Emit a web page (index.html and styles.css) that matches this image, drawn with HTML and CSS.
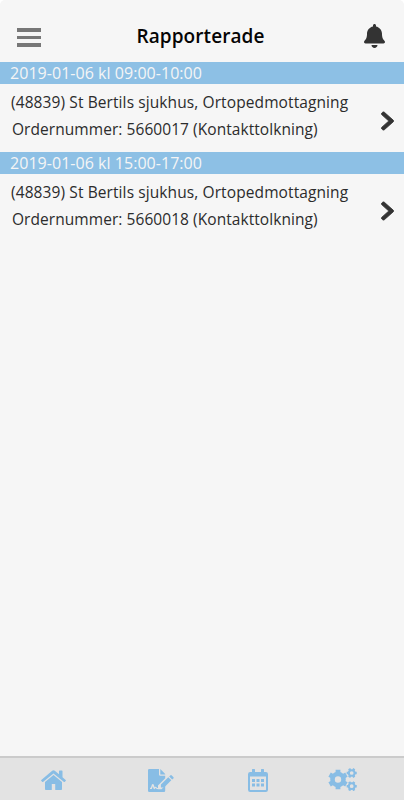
FILE: index.html
```html
<!DOCTYPE html>
<html lang="sv">
<head>
<meta charset="utf-8">
<title>Rapporterade</title>
<link rel="stylesheet" href="styles.css">
</head>
<body>
<div class="app">
  <header class="header">
    <div class="menu"><span></span><span></span><span></span></div>
    <h1>Rapporterade</h1>
    <svg class="bell" viewBox="0 0 448 512" preserveAspectRatio="none"><path d="M224 512c35.32 0 63.97-28.65 63.97-64H160.03c0 35.35 28.65 64 63.97 64zm215.39-149.71c-19.32-20.76-55.47-51.99-55.47-154.29 0-77.7-54.48-139.9-127.94-155.16V32c0-17.67-14.32-32-31.98-32s-31.98 14.33-31.98 32v20.84C118.56 68.1 64.08 130.3 64.08 208c0 102.3-36.15 133.53-55.47 154.29-6 6.45-8.66 14.16-8.61 21.71.11 16.4 12.98 32 32.1 32h383.8c19.12 0 32-15.6 32.1-32 .05-7.55-2.61-15.27-8.61-21.71z"/></svg>
  </header>
  <main class="list">
    <section class="group">
      <h2>2019-01-06 kl 09:00-10:00</h2>
      <div class="item">
        <div class="text"><p class="place">(48839) St Bertils sjukhus, Ortopedmottagning</p><p class="order">Ordernummer: 5660017 (Kontakttolkning)</p></div>
        <svg class="chevron" viewBox="20 15 280 482" preserveAspectRatio="none"><path d="M285.476 272.971L91.132 467.314c-9.373 9.373-24.569 9.373-33.941 0l-22.667-22.667c-9.357-9.357-9.375-24.522-.04-33.901L188.505 256 34.484 101.255c-9.335-9.379-9.317-24.544.04-33.901l22.667-22.667c9.373-9.373 24.569-9.373 33.941 0L285.475 239.03c9.373 9.372 9.373 24.568.001 33.941z"/></svg>
      </div>
    </section>
    <section class="group">
      <h2>2019-01-06 kl 15:00-17:00</h2>
      <div class="item">
        <div class="text"><p class="place">(48839) St Bertils sjukhus, Ortopedmottagning</p><p class="order">Ordernummer: 5660018 (Kontakttolkning)</p></div>
        <svg class="chevron" viewBox="20 15 280 482" preserveAspectRatio="none"><path d="M285.476 272.971L91.132 467.314c-9.373 9.373-24.569 9.373-33.941 0l-22.667-22.667c-9.357-9.357-9.375-24.522-.04-33.901L188.505 256 34.484 101.255c-9.335-9.379-9.317-24.544.04-33.901l22.667-22.667c9.373-9.373 24.569-9.373 33.941 0L285.475 239.03c9.373 9.372 9.373 24.568.001 33.941z"/></svg>
      </div>
    </section>
  </main>
  <nav class="tabs">
    <svg class="home" viewBox="0 0 25 20"><path d="M12.5 4.9L21 12v7.2q0 .8-.8.8h-5.400q-.6 0-.6-.6V14H10.800v5.400q0 .6-.6.6H4.800Q4 20 4 19.200V12z"/><path d="M11.200.7q1.300-1 2.600 0L18 4.200V1.200q0-.6.6-.6h2.300q.6 0 .6.600v6l3.200 2.700q.4.400.1.800l-.9 1.100q-.4.400-.9.100L12.500 3.400 2 11.900q-.5.300-.9-.1l-.9-1.100q-.3-.5.100-.8z"/></svg>
    <svg class="sign" viewBox="0 0 26 23"><path d="M1.200 0H11v5.500q0 1.200 1.200 1.200h5v2.500L10 16.400v2.700q-1 0-1.300-.6c-.5-.9-1.600-.9-2.100-.3L5.700 15.600c-.3-.9-1.500-.9-1.800 0l-1 3.100H2v1.300h1.800l1-2.700.9 2.400c.3.600.9.600 1.200.1l.6-1c.6 1 1.200 1.400 2.500 1.400h3.500l3.700-3.600v5.200q0 1.200-1.200 1.200H1.200Q0 23 0 21.800V1.200Q0 0 1.200 0z"/><path d="M12.300 0l4.900 5.100v.3h-4.900zM20.300 8.300l3 3-7.200 7.300h-3.200v-3zM21.200 7.400l1-1q.8-.8 1.600 0l1.500 1.500q.8.800 0 1.600l-1.100 1z"/></svg>
    <svg class="cal" viewBox="0 0 20 23"><path fill-rule="evenodd" d="M2.200 3H4V.6Q4 0 4.600 0h1.800Q7 0 7 .6V3h6V.6q0-.6.6-.6h1.800q.6 0 .6.6V3h1.800Q20 3 20 5.200v15.600q0 2.200-2.200 2.200H2.200Q0 23 0 20.800V5.200Q0 3 2.200 3zM2 7.500v13q0 .5.5.5h15q.5 0 .5-.5v-13z"/><path d="M4 10h3v3H4zm4.500 0h3v3h-3zm4.500 0h3v3h-3zM4 14.500h3v3H4zm4.500 0h3v3h-3zm4.500 0h3v3h-3z"/></svg>
    <svg class="cogs" viewBox="0 0 29 23">
      <defs><g id="teeth"><path fill="none" d="M-9.700 0H-6M6 0H9.700M-4.850-8.400L-3-5.200M4.850-8.400L3-5.200M-4.850 8.400L-3 5.200M4.850 8.400L3 5.200"/></g></defs>
      <g transform="translate(10 11.500)"><circle r="5.500" fill="none" stroke-width="4.600"/><use href="#teeth" stroke-width="4.800" transform="rotate(30)"/></g>
      <g transform="translate(23.700 5)"><circle r="2.850" fill="none" stroke-width="2"/><use href="#teeth" stroke-width="4.600" transform="scale(.52)"/></g>
      <g transform="translate(23.700 18.200)"><circle r="2.850" fill="none" stroke-width="2"/><use href="#teeth" stroke-width="4.600" transform="scale(.52)"/></g>
    </svg>
  </nav>
</div>
</body>
</html>
```
FILE: styles.css
```css
* { box-sizing: border-box; }
html { background: #fff; }
body { margin: 0; color: #2c2c2c; font-family: "Open Sans", "Noto Sans", sans-serif; }
.app { height: 800px; display: flex; flex-direction: column; background: #f6f6f6; border-radius: 5px 5px 0 0; overflow: hidden; }
.header { height: 62px; padding: 12px 19px 0 17px; display: grid; grid-template-columns: 24px 1fr 21px; align-items: center; }
.menu { display: grid; gap: 4px; padding-top: 1px; }
.menu span { height: 3.500px; background: #777; }
h1 { margin: 0; font: 600 19px/28px "Open Sans", sans-serif; letter-spacing: .08px; color: #050505; padding: 0 4px 3px 0; text-align: center; }
.bell { width: 21px; height: 24px; fill: #333; margin-top: -2px; }
.list { flex: 1; }
.group { height: 90px; }
h2 { margin: 0; height: 22px; padding-left: 10px; background: #8dc0e5; color: #f5f5f5; font-size: 16px; font-weight: 400; line-height: 22px; letter-spacing: .04px; white-space: nowrap; }
.item { height: 68px; padding: 5px 10px 0 11px; display: flex; justify-content: space-between; align-items: flex-start; }
.text { flex: 1; white-space: nowrap; }
p { margin: 0; font-size: 15.500px; font-weight: 400; line-height: 27px; }
.place { letter-spacing: .1px; }
.order { padding-left: 1px; letter-spacing: .06px; }
.chevron { width: 13px; height: 20px; margin-top: 22px; flex: none; fill: #333; stroke: #333; stroke-width: 20px; }
.tabs { height: 44px; background: #e3e3e3; border-top: 2px solid #cbcbcb; padding: 10px 46px 0 41px; display: flex; fill: #88bde5; align-items: flex-start; }
.home { width: 25px; height: 20px; margin: 2px 82px 0 0; }
.sign { width: 26px; height: 23px; margin: 1px 74px 0 0; }
.cal { width: 20px; height: 23px; margin: 1px 60px 0 0; }
.cogs { width: 29px; height: 23px; stroke: #88bde5; }
```
